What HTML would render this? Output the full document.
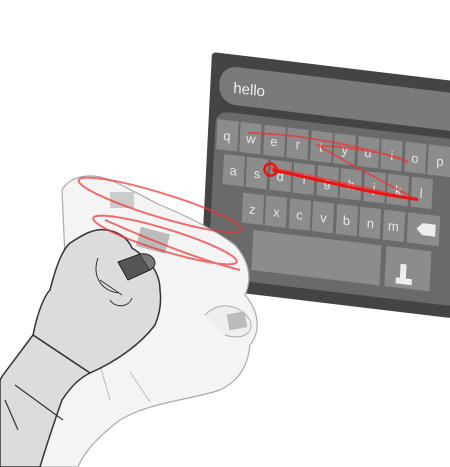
<!DOCTYPE html>
<html><head><style>
html,body{margin:0;padding:0;background:#fff;width:450px;height:467px;overflow:hidden}
svg{display:block}
text{font-family:"Liberation Sans",sans-serif}
</style></head><body>
<svg width="450" height="467" viewBox="0 0 450 467">
<!-- keyboard panel -->
<g transform="matrix(1,0.12,-0.05,1,212,52)">
  <rect x="0" y="0" width="252" height="236" rx="4" fill="#444"/>
  <rect x="9" y="12" width="250" height="38" rx="17" fill="#7a7a7a"/>
  <text x="23" y="38" font-size="15" fill="#eee">hello</text>
  <rect x="7" y="58" width="250" height="166" rx="12" fill="#6a6a6a"/>
  <g fill="#8c8c8c">
    <rect x="9" y="66" width="21" height="30"/><rect x="32" y="66" width="21" height="30"/><rect x="56" y="66" width="21" height="30"/><rect x="79" y="66" width="21" height="30"/><rect x="103" y="66" width="21" height="30"/><rect x="126" y="66" width="21" height="30"/><rect x="150" y="66" width="21" height="30"/><rect x="173" y="66" width="21" height="30"/><rect x="197" y="66" width="21" height="30"/><rect x="220" y="66" width="30" height="30"/>
    <rect x="17" y="100" width="21" height="30"/><rect x="40" y="100" width="21" height="30"/><rect x="64" y="100" width="21" height="30"/><rect x="87" y="100" width="21" height="30"/><rect x="111" y="100" width="21" height="30"/><rect x="134" y="100" width="21" height="30"/><rect x="158" y="100" width="21" height="30"/><rect x="181" y="100" width="21" height="30"/><rect x="205" y="100" width="21" height="30"/>
    <rect x="38" y="136" width="21" height="30"/><rect x="61" y="136" width="21" height="30"/><rect x="85" y="136" width="21" height="30"/><rect x="108" y="136" width="21" height="30"/><rect x="132" y="136" width="21" height="30"/><rect x="155" y="136" width="21" height="30"/><rect x="179" y="136" width="21" height="30"/><rect x="203" y="136" width="32" height="30"/>
    <rect x="50" y="172" width="128" height="40"/><rect x="183" y="172" width="45" height="40"/>
  </g>
  <g fill="#e6e6e6" font-size="13" text-anchor="middle">
    <text x="19" y="86">q</text><text x="43" y="86">w</text><text x="66" y="86">e</text><text x="90" y="86">r</text><text x="113" y="86">t</text><text x="137" y="86">y</text><text x="160" y="86">u</text><text x="184" y="86">i</text><text x="207" y="86">o</text><text x="232" y="86">p</text>
    <text x="27" y="120">a</text><text x="51" y="120">s</text><text x="74" y="120">d</text><text x="98" y="120">f</text><text x="121" y="120">g</text><text x="145" y="120">h</text><text x="168" y="120">j</text><text x="192" y="120">k</text><text x="215" y="120">l</text>
    <text x="48" y="156">z</text><text x="72" y="156">x</text><text x="95" y="156">c</text><text x="119" y="156">v</text><text x="142" y="156">b</text><text x="166" y="156">n</text><text x="189" y="156">m</text>
  </g>
  <path d="M212 151 l6 -6 h13 v12 h-13 z" fill="#eee"/>
  <path d="M198 188 h6 v14 h6 v6 h-16 v-6 h4 z" fill="#eee"/>
  <path d="M62 108 C100 110 170 118 210 122 C180 110 130 90 110 80 C150 78 190 80 200 86 C170 78 100 70 40 76" fill="none" stroke="#e33" stroke-width="2" opacity="0.7"/>
  <path d="M66 110 C110 114 170 122 212 122" fill="none" stroke="#e11" stroke-width="3"/>
  <circle cx="64" cy="110" r="6" fill="none" stroke="#e11" stroke-width="2.5"/>
</g>
<!-- back light hand -->
<path d="M62 190 C70 176 90 172 110 180 C125 186 140 195 160 205 C185 215 215 230 235 245 C250 262 252 280 245 295 C258 310 262 330 250 345 C248 365 240 380 220 390 C190 400 150 402 120 420 C100 435 85 450 78 467 L30 467 C40 430 60 400 70 370 Z" fill="#f4f4f4" stroke="#aaa" stroke-width="1.2"/>
<path d="M205 315 C220 300 240 305 250 320 C255 335 240 340 225 335" fill="#eee" stroke="#aaa"/>
<rect x="228" y="313" width="18" height="16" fill="#bbb" transform="rotate(-10 236 321)"/>
<rect x="138" y="230" width="30" height="20" fill="#bbb" transform="rotate(15 152 240)"/>
<rect x="110" y="192" width="24" height="16" fill="#ccc"/>
<path d="M130 372 L150 402 M100 365 L110 400" stroke="#bbb" fill="none"/>
<!-- front hand -->
<path d="M90 232 C105 226 125 232 132 248 C148 258 160 272 160 290 C162 305 158 318 155 325 C140 345 115 362 90 373 L33 335 C38 310 45 295 50 290 C55 270 62 250 70 243 C78 238 84 234 90 232 Z" fill="#dcdcdc" stroke="#333" stroke-width="1.5"/>
<path d="M33 335 L3 375 L0 380 L0 467 L40 467 C48 440 55 420 62 400 C72 385 80 378 90 373 Z" fill="#dcdcdc" stroke="#333" stroke-width="1.5"/>
<path d="M15 385 L63 420" stroke="#333" stroke-width="1.2"/>
<path d="M5 400 L18 430" stroke="#333" stroke-width="1.2"/>
<path d="M98 258 C92 275 100 290 118 293 M110 300 C115 308 128 308 132 298 M100 280 L122 295" fill="none" stroke="#333"/>
<path d="M118 262 L140 254 L150 270 L128 280 Z" fill="#555" stroke="#222"/>
<path d="M140 254 C154 252 160 265 150 270" fill="#777" stroke="#222"/>
<!-- red swirls -->
<g fill="none" stroke="#e33" stroke-width="2" opacity="0.7">
  <ellipse cx="160" cy="205" rx="85" ry="12" transform="rotate(17 160 205)"/>
  <ellipse cx="165" cy="240" rx="75" ry="11" transform="rotate(17 165 240)"/>
  <path d="M105 220 C150 240 200 260 240 270"/>
</g>
</svg>
</body></html>
